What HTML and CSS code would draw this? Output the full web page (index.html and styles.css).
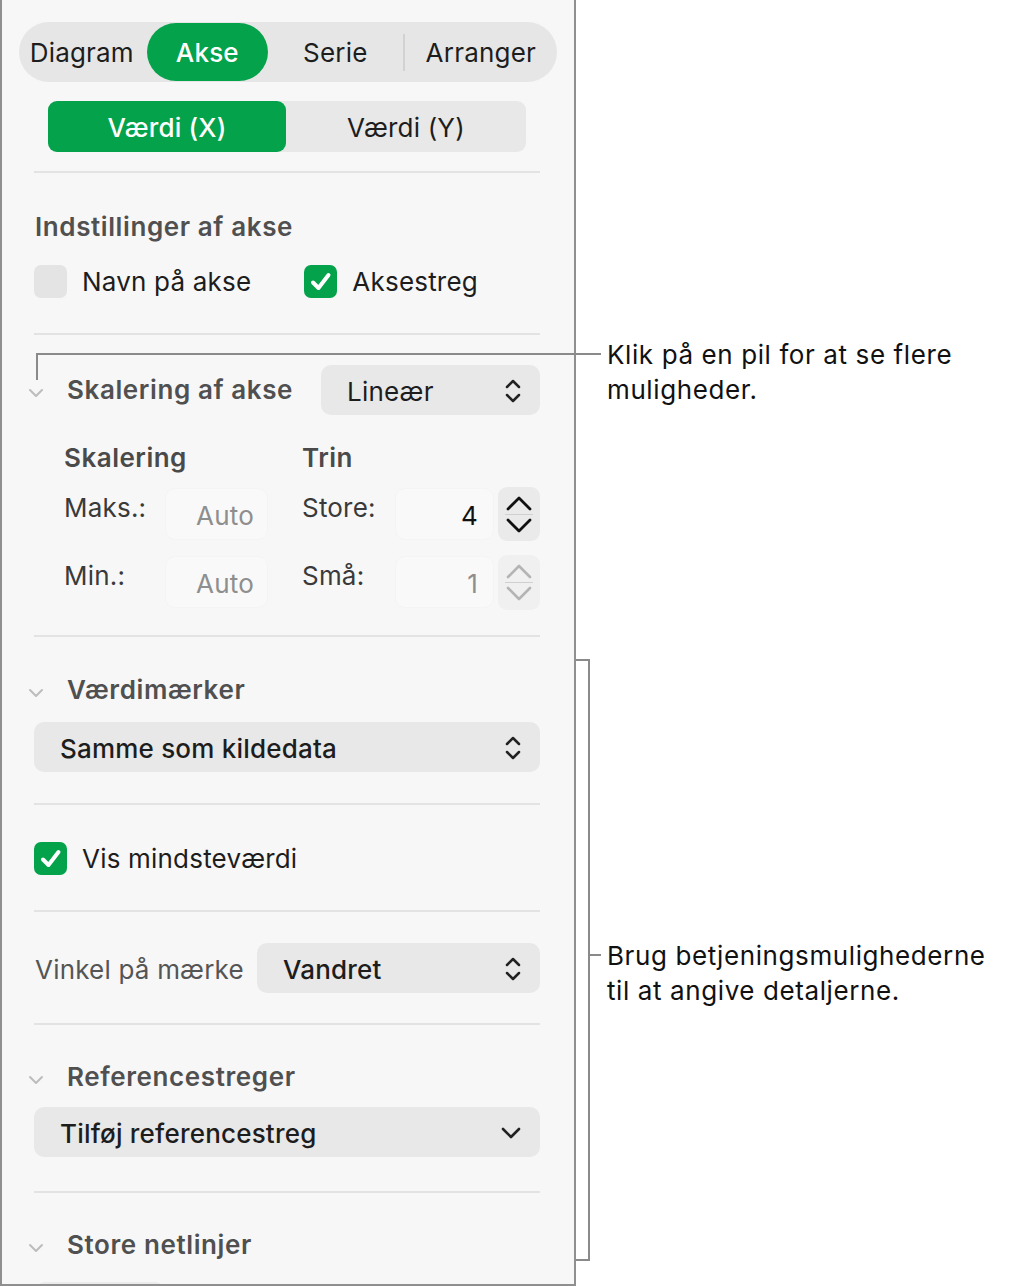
FILE: index.html
```html
<!DOCTYPE html>
<html lang="da">
<head>
    <meta charset="UTF-8">
    <title>Akse</title>
    <link rel="stylesheet" href="styles.css">
</head>
<body>
<div class="page">
    <div class="panel">
        <div class="tabs">
            <div class="tab tab-diagram">Diagram</div>
            <div class="tab tab-akse active">Akse</div>
            <div class="tab tab-serie">Serie</div>
            <div class="tab-sep"></div>
            <div class="tab tab-arranger">Arranger</div>
        </div>

        <div class="subseg">
            <div class="seg active">Værdi (X)</div>
            <div class="seg">Værdi (Y)</div>
        </div>

        <div class="divider d1"></div>

        <div class="title t-settings">Indstillinger af akse</div>
        <div class="checks">
            <label class="check"><span class="box"></span>Navn på akse</label>
            <label class="check check-2"><span class="box on"><svg width="33" height="33" viewBox="0 0 33 33"><path d="M9 17.5 L14.5 23 L24.5 10" fill="none" stroke="#fff" stroke-width="4" stroke-linecap="round" stroke-linejoin="round"/></svg></span>Aksestreg</label>
        </div>

        <div class="divider d2"></div>

        <div class="row scale-row">
            <svg class="disclose" width="16" height="10" viewBox="0 0 16 10"><path d="M2 2 L8 8 L14 2" fill="none" stroke="#bdbdbd" stroke-width="2" stroke-linecap="round" stroke-linejoin="round"/></svg>
            <div class="title">Skalering af akse</div>
            <div class="popup popup-small">
                <span class="popup-text light">Lineær</span>
                <svg class="updown" width="18" height="26" viewBox="0 0 18 26"><path d="M3 9 L9 3 L15 9 M3 17 L9 23 L15 17" fill="none" stroke="#222" stroke-width="2.5" stroke-linecap="round" stroke-linejoin="round"/></svg>
            </div>
        </div>

        <div class="subheads">
            <div class="subhead sub-l">Skalering</div>
            <div class="subhead">Trin</div>
        </div>

        <div class="scale-grid">
            <div class="cell">
                <span class="lbl lbl-l">Maks.:</span>
                <span class="field field-l">Auto</span>
            </div>
            <div class="cell">
                <span class="lbl lbl-r">Store:</span>
                <span class="field field-r dark">4</span>
                <div class="stepper">
                    <svg width="28" height="16" viewBox="0 0 28 16"><path d="M3 14 L14 3 L25 14" fill="none" stroke="#111" stroke-width="2.8" stroke-linecap="round" stroke-linejoin="round"/></svg>
                    <span class="step-sep"></span>
                    <svg width="28" height="16" viewBox="0 0 28 16"><path d="M3 2 L14 13 L25 2" fill="none" stroke="#111" stroke-width="2.8" stroke-linecap="round" stroke-linejoin="round"/></svg>
                </div>
            </div>

            <div class="cell">
                <span class="lbl lbl-l">Min.:</span>
                <span class="field field-l">Auto</span>
            </div>
            <div class="cell">
                <span class="lbl lbl-r">Små:</span>
                <span class="field field-r">1</span>
                <div class="stepper off">
                    <svg width="28" height="16" viewBox="0 0 28 16"><path d="M3 14 L14 3 L25 14" fill="none" stroke="#b4b4b4" stroke-width="2.6" stroke-linecap="round" stroke-linejoin="round"/></svg>
                    <span class="step-sep"></span>
                    <svg width="28" height="16" viewBox="0 0 28 16"><path d="M3 2 L14 13 L25 2" fill="none" stroke="#b4b4b4" stroke-width="2.6" stroke-linecap="round" stroke-linejoin="round"/></svg>
                </div>
            </div>
        </div>

        <div class="divider d3"></div>

        <div class="row section-head sh-labels">
            <svg class="disclose" width="16" height="10" viewBox="0 0 16 10"><path d="M2 2 L8 8 L14 2" fill="none" stroke="#bdbdbd" stroke-width="2" stroke-linecap="round" stroke-linejoin="round"/></svg>
            <div class="title">Værdimærker</div>
        </div>
        <div class="popup popup-wide p-labels">
            <span class="popup-text">Samme som kildedata</span>
            <svg class="updown" width="18" height="26" viewBox="0 0 18 26"><path d="M3 9 L9 3 L15 9 M3 17 L9 23 L15 17" fill="none" stroke="#222" stroke-width="2.5" stroke-linecap="round" stroke-linejoin="round"/></svg>
        </div>

        <div class="divider d4"></div>

        <label class="check check-min"><span class="box on"><svg width="33" height="33" viewBox="0 0 33 33"><path d="M9 17.5 L14.5 23 L24.5 10" fill="none" stroke="#fff" stroke-width="4" stroke-linecap="round" stroke-linejoin="round"/></svg></span>Vis mindsteværdi</label>

        <div class="divider d5"></div>

        <div class="row angle-row">
            <span class="plain">Vinkel på mærke</span>
            <div class="popup popup-angle">
                <span class="popup-text">Vandret</span>
                <svg class="updown" width="18" height="26" viewBox="0 0 18 26"><path d="M3 9 L9 3 L15 9 M3 17 L9 23 L15 17" fill="none" stroke="#222" stroke-width="2.5" stroke-linecap="round" stroke-linejoin="round"/></svg>
            </div>
        </div>

        <div class="divider d6"></div>

        <div class="row section-head sh-ref">
            <svg class="disclose" width="16" height="10" viewBox="0 0 16 10"><path d="M2 2 L8 8 L14 2" fill="none" stroke="#bdbdbd" stroke-width="2" stroke-linecap="round" stroke-linejoin="round"/></svg>
            <div class="title">Referencestreger</div>
        </div>
        <div class="popup popup-wide p-ref">
            <span class="popup-text">Tilføj referencestreg</span>
            <svg class="down" width="20" height="12" viewBox="0 0 20 12"><path d="M2 2 L10 10 L18 2" fill="none" stroke="#222" stroke-width="2.6" stroke-linecap="round" stroke-linejoin="round"/></svg>
        </div>

        <div class="divider d7"></div>

        <div class="row section-head sh-grid">
            <svg class="disclose" width="16" height="10" viewBox="0 0 16 10"><path d="M2 2 L8 8 L14 2" fill="none" stroke="#bdbdbd" stroke-width="2" stroke-linecap="round" stroke-linejoin="round"/></svg>
            <div class="title">Store netlinjer</div>
        </div>
        <div class="stub"></div>
    </div>

    <!-- callouts -->
    <div class="leader-h"></div>
    <div class="leader-v"></div>
    <div class="note note-top">Klik på en pil for at se flere muligheder.</div>

    <div class="bracket"></div>
    <div class="bracket-tick"></div>
    <div class="note note-bottom">Brug betjeningsmulighederne til at angive detaljerne.</div>
</div>
</body>
</html>
```

FILE: styles.css
```css
body {
    margin: 0;
    background: #fff;
    font-family: Inter, "Noto Sans", sans-serif;
    color: #1d1d1d;
}
.page {
    position: relative;
    width: 1011px;
    height: 1287px;
    overflow: hidden;
}
.panel {
    box-sizing: border-box;
    width: 576px;
    height: 1286px;
    padding: 22px 34px 0 32px;
    background: #f7f7f7;
    border-left: 2px solid #8f8f8f;
    border-right: 2px solid #8f8f8f;
    border-bottom: 2px solid #8f8f8f;
    overflow: hidden;
    display: flex;
    flex-direction: column;
    letter-spacing: 0.2px;
}
.panel > * {
    flex-shrink: 0;
}

/* top tabs */
.tabs {
    display: flex;
    align-items: center;
    height: 60px;
    margin: 0 -17px 0 -15px;
    background: #e6e6e6;
    border-radius: 30px;
    font-size: 26px;
}
.tab {
    height: 58px;
    line-height: 60px;
    text-align: center;
    border-radius: 29px;
}
.tab-diagram { width: 126px; }
.tab-akse { width: 122px; margin-left: 2px; }
.tab-serie { width: 135px; }
.tab-arranger { width: 153px; }
.tab.active {
    background: #03a24b;
    color: #fff;
    font-weight: 500;
}
.tab-sep {
    width: 2px;
    height: 37px;
    background: #d2d2d2;
}

/* X / Y segment */
.subseg {
    display: flex;
    margin: 19px 0 0 14px;
    width: 478px;
    height: 51px;
    background: #e8e8e8;
    border-radius: 9px;
    font-size: 26px;
}
.seg {
    flex: 1;
    line-height: 53px;
    text-align: center;
    border-radius: 9px;
}
.seg.active {
    flex: 0 0 238px;
    background: #03a24b;
    color: #fff;
    font-weight: 500;
}

.divider {
    height: 2px;
    background: #e3e3e3;
}
.d1 { margin-top: 19px; }
.d2 { margin-top: 35px; }
.d3 { margin-top: 26px; }
.d4 { margin-top: 31px; }
.d5 { margin-top: 35px; }
.d6 { margin-top: 30px; }
.d7 { margin-top: 34px; }

.title {
    font-size: 26px;
    line-height: 34px;
    font-weight: 600;
    color: #505050;
    letter-spacing: 0.6px;
}
.t-settings {
    margin-top: 37px;
    padding-left: 1px;
}

.checks {
    display: flex;
    margin-top: 21px;
}
.check {
    display: flex;
    align-items: center;
    font-size: 26px;
    height: 33px;
}
.check-2 { margin-left: 53px; }
.box {
    width: 33px;
    height: 33px;
    border-radius: 7px;
    background: #e4e4e4;
    margin-right: 15px;
    flex-shrink: 0;
}
.box.on { background: #03a24b; }
.box svg { display: block; }
.check-min {
    margin-top: 36px;
    height: 34px;
}

.row {
    display: flex;
    align-items: center;
}
.disclose {
    margin-left: -6px;
    margin-right: 23px;
    margin-top: 6px;
    flex-shrink: 0;
}
.scale-row {
    margin-top: 30px;
    height: 50px;
}

.popup {
    display: flex;
    align-items: center;
    justify-content: space-between;
    box-sizing: border-box;
    height: 50px;
    padding: 2px 18px 0 26px;
    background: #e8e8e8;
    border-radius: 10px;
    font-size: 26px;
    font-weight: 500;
}
.popup-text.light { font-weight: 400; }
.popup-small {
    width: 219px;
    margin-left: auto;
}
.popup-wide { width: 100%; }
.popup-angle {
    width: 283px;
    margin-left: auto;
}
.p-labels { margin-top: 16px; }
.p-ref {
    margin-top: 14px;
    padding-right: 19px;
}

.subheads {
    display: flex;
    margin-top: 26px;
    padding-left: 30px;
    height: 32px;
}
.subhead {
    font-size: 26px;
    font-weight: 600;
    color: #4a4a4a;
    line-height: 34px;
    letter-spacing: 0.5px;
}
.sub-l { width: 238px; }

.scale-grid {
    display: grid;
    grid-template-columns: 238px 1fr;
    grid-auto-rows: 54px;
    row-gap: 14px;
    padding-left: 30px;
    margin-top: 14px;
}
.cell {
    display: flex;
    align-items: flex-start;
}
.lbl {
    font-size: 26px;
    line-height: 32px;
    padding-top: 5px;
    color: #3a3a3a;
}
.lbl-l { width: 101px; }
.lbl-r { width: 93px; }
.field {
    box-sizing: border-box;
    height: 52px;
    line-height: 54px;
    margin-top: 1px;
    text-align: right;
    font-size: 26px;
    color: #8e8e8e;
    background: #f9f9f9;
    border: 1px solid #f4f4f4;
    border-radius: 10px;
}
.field-l {
    width: 103px;
    padding-right: 13px;
}
.field-r {
    width: 99px;
    padding-right: 15px;
}
.field.dark { color: #111; }
.stepper {
    width: 42px;
    height: 54px;
    margin-left: 4px;
    background: #eaeaea;
    border-radius: 9px;
    display: flex;
    flex-direction: column;
    align-items: center;
    justify-content: center;
    gap: 3px;
}
.stepper.off { background: #f0f0f0; height: 55px; }
.stepper svg { display: block; }
.step-sep {
    width: 28px;
    height: 1px;
    background: #d0d0d0;
}

.section-head { height: 32px; }
.sh-labels { margin-top: 37px; }
.sh-ref { margin-top: 36px; }
.sh-grid { margin-top: 36px; }

.angle-row {
    margin-top: 31px;
    height: 50px;
}
.plain {
    font-size: 26px;
    color: #555;
    padding-left: 1px;
    padding-top: 2px;
}

.stub {
    margin-top: 21px;
    margin-left: 1px;
    width: 130px;
    height: 20px;
    border-radius: 10px;
    background: #ebebeb;
}

/* annotations */
.leader-h {
    position: absolute;
    left: 36px;
    top: 353px;
    width: 565px;
    height: 2px;
    background: #8a8a8a;
}
.leader-v {
    position: absolute;
    left: 36px;
    top: 353px;
    width: 2px;
    height: 27px;
    background: #8a8a8a;
}
.bracket {
    position: absolute;
    left: 576px;
    top: 659px;
    width: 12px;
    height: 598px;
    border-top: 2px solid #8a8a8a;
    border-right: 2px solid #8a8a8a;
    border-bottom: 2px solid #8a8a8a;
}
.bracket-tick {
    position: absolute;
    left: 590px;
    top: 954px;
    width: 11px;
    height: 2px;
    background: #8a8a8a;
}
.note {
    position: absolute;
    left: 607px;
    font-size: 26px;
    line-height: 35px;
    color: #111;
    letter-spacing: 0.6px;
}
.note-top {
    top: 337px;
    width: 370px;
}
.note-bottom {
    top: 938px;
    width: 395px;
}
```
